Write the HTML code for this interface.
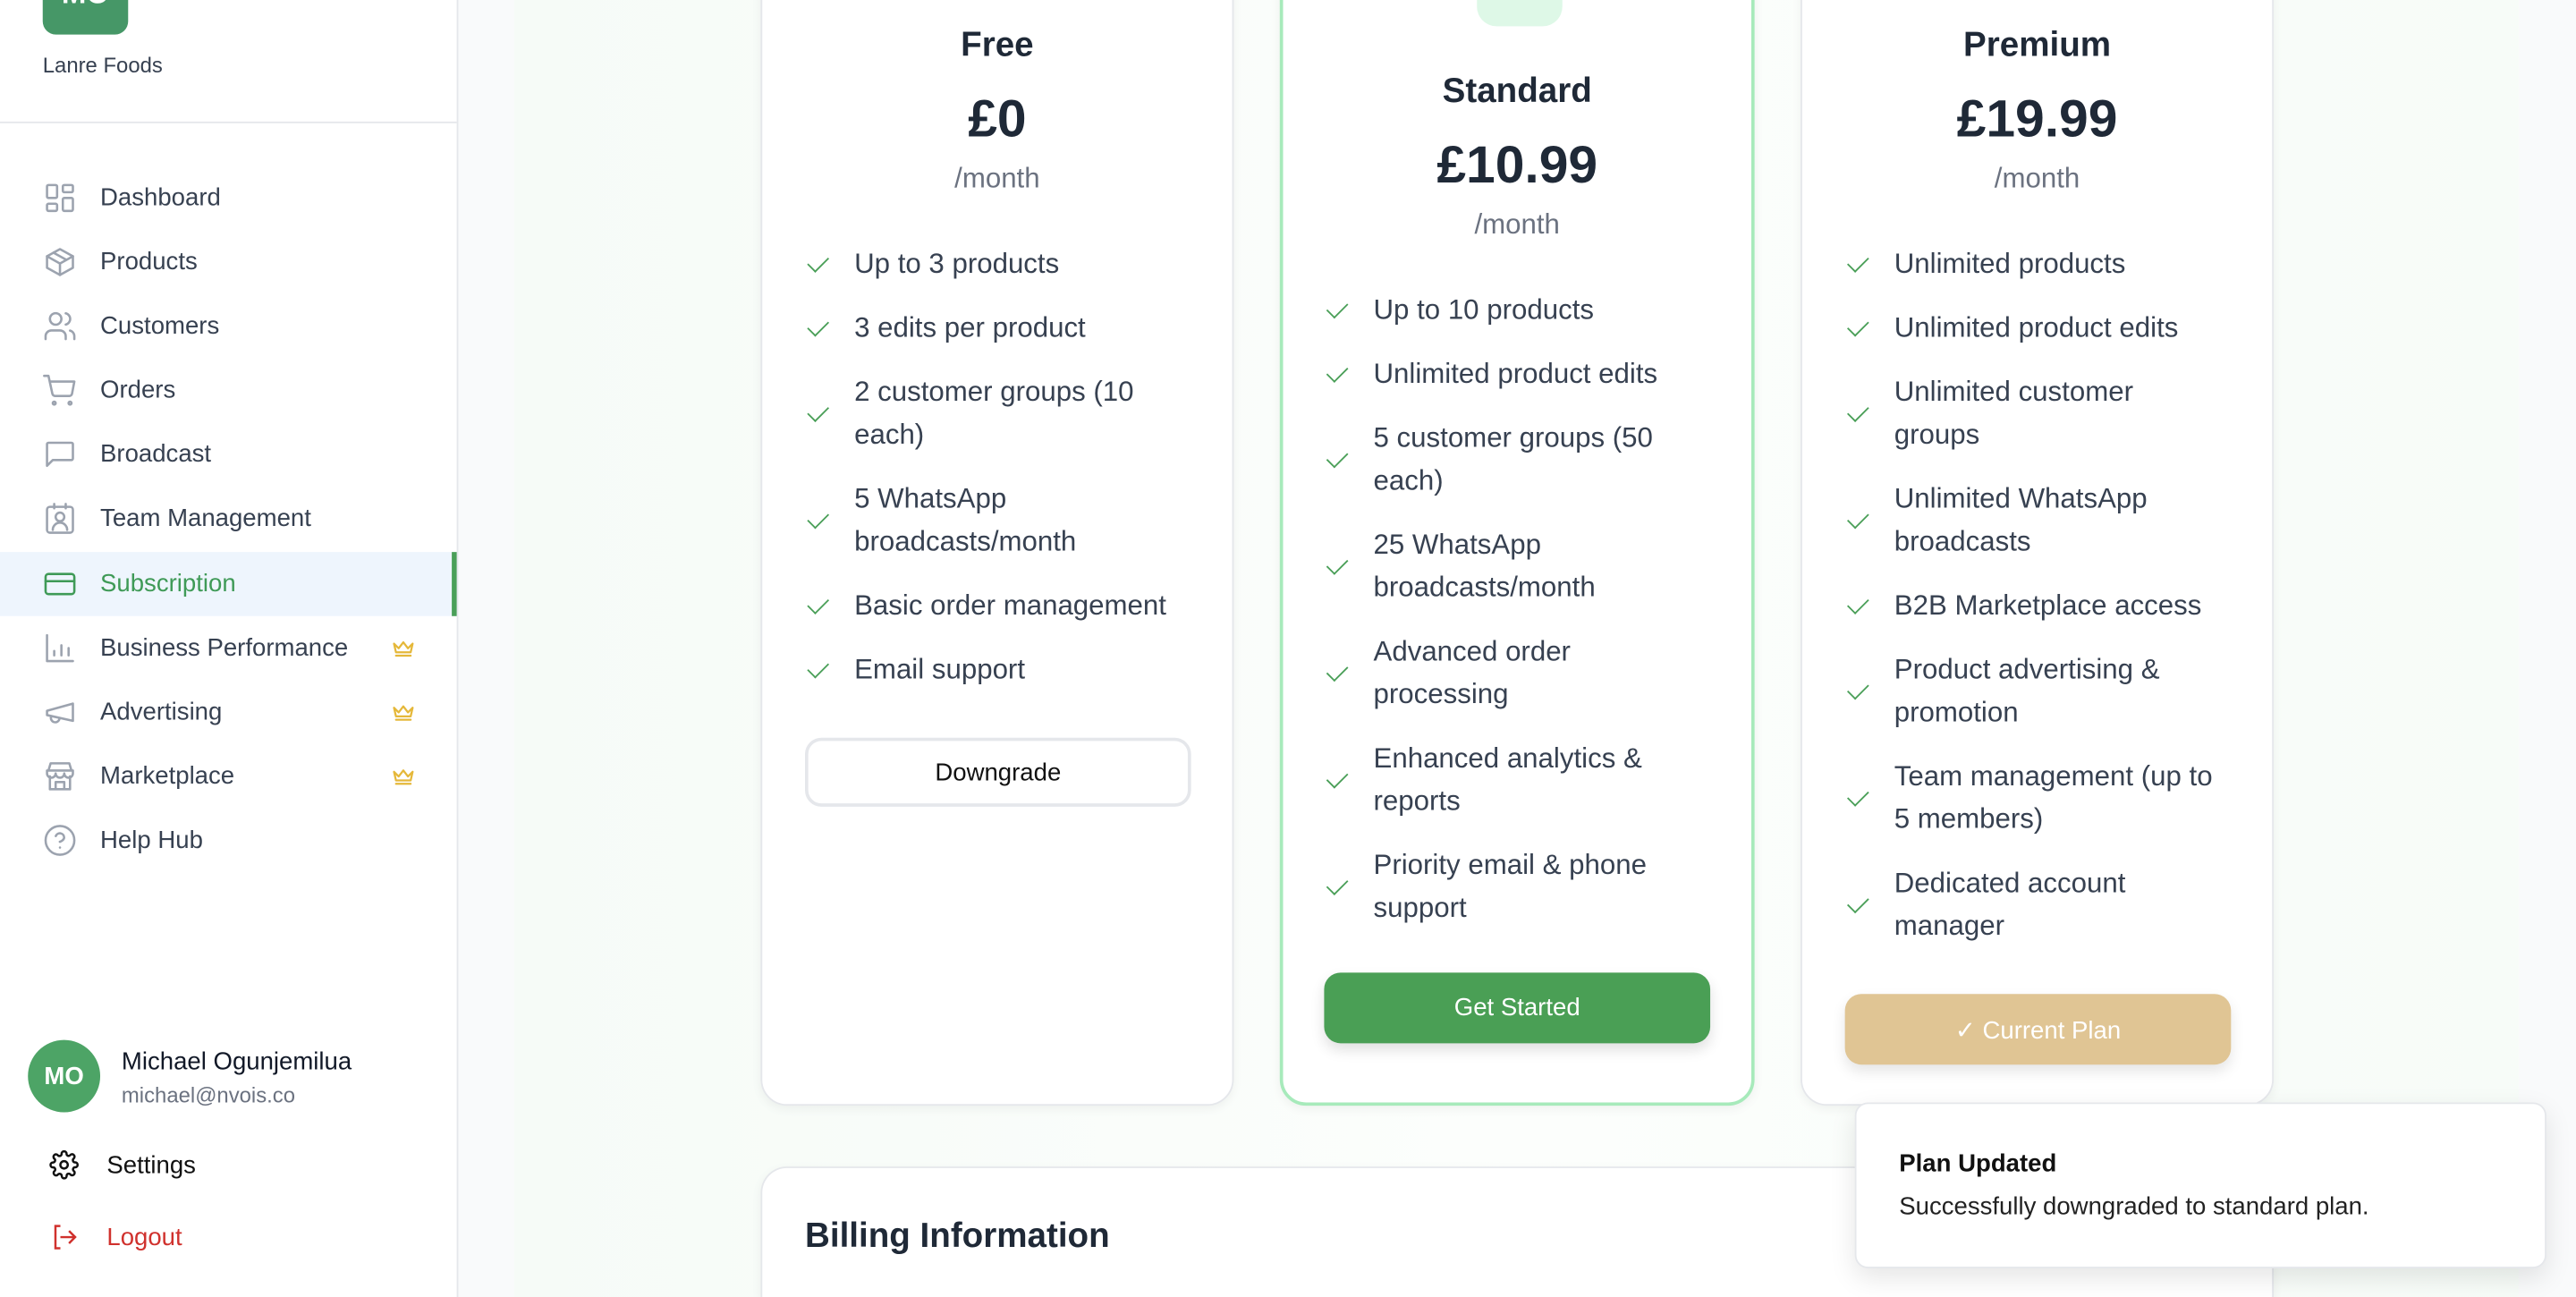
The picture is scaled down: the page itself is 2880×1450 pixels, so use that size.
<!DOCTYPE html>
<html><head><meta charset="utf-8"><style>
*{box-sizing:border-box;margin:0;padding:0}
html,body{width:2880px;height:1450px;overflow:hidden;background:#fff}
#s{position:absolute;left:0;top:0;width:1568px;height:789.5px;transform:scale(1.836735);transform-origin:0 0;font-family:"Liberation Sans",sans-serif;color:#1f2937;background:#f9fafb;overflow:hidden}
.abs{position:absolute}
#side{left:0;top:0;width:279px;height:790px;background:#fff;border-right:1px solid #e5e7eb;overflow:hidden}
.nav{position:absolute;left:0;width:279px;height:39px;display:flex;align-items:center;font-size:15px;color:#374151}
.nav svg{position:absolute;left:26px;width:21px;height:21px;fill:none;stroke:#9ca3af;stroke-width:1.6;stroke-linecap:round;stroke-linejoin:round}
.nav span{position:absolute;left:61px;top:11px}
.nav svg.crown{position:absolute;left:239px;top:15px;width:13px;height:10px;fill:none;stroke:#e5b83a;stroke-width:1.5}
.card{position:absolute;background:#fff;border:1px solid #e5e7eb;border-radius:16px;box-shadow:0 2px 6px rgba(0,0,0,.05)}
.t{position:absolute;width:100%;text-align:center}
.title{font-size:21px;font-weight:bold;color:#1f2937}
.price{font-size:32px;font-weight:bold;color:#1f2937}
.mo{font-size:17px;color:#6b7280}
ul{position:absolute;list-style:none}
li{position:relative;font-size:17px;line-height:26px;color:#374151;margin-bottom:13px;padding-left:30px}
li:before{content:"";position:absolute;left:2px;top:50%;width:11px;height:6px;border-left:1.6px solid #4a9f58;border-bottom:1.6px solid #4a9f58;transform:translateY(-75%) rotate(-45deg)}
.btn{position:absolute;border-radius:10px;display:flex;align-items:center;justify-content:center;font-size:15px}
</style></head><body><div id="s">
<div class="abs" style="left:313px;top:0;width:1220px;height:790px;background:linear-gradient(90deg,#f6fbf7,#fcfefc 50%,#f7fcf8)"></div>
<div id="side" class="abs">
 <div class="abs" style="left:26px;top:-12px;width:52px;height:33px;background:#469767;border-radius:8px;color:#fff;font-weight:bold;font-size:18px;text-align:center;line-height:16px;overflow:hidden">MO</div>
 <div class="abs" style="left:26px;top:32px;font-size:13px;color:#374151">Lanre Foods</div>
 <div class="abs" style="left:0;top:74px;width:279px;height:1px;background:#e5e7eb"></div>
 <div class="nav" style="top:101px"><svg viewBox="0 0 24 24"><rect x="3" y="3" width="7" height="9" rx="1"/><rect x="14" y="3" width="7" height="5" rx="1"/><rect x="14" y="12" width="7" height="9" rx="1"/><rect x="3" y="16" width="7" height="5" rx="1"/></svg><span>Dashboard</span></div>
 <div class="nav" style="top:140px"><svg viewBox="0 0 24 24"><path d="M21 8l-9-5-9 5v8l9 5 9-5z"/><path d="M3 8l9 5 9-5M12 13v8M7.5 5.5l9 5"/></svg><span>Products</span></div>
 <div class="nav" style="top:179px"><svg viewBox="0 0 24 24"><circle cx="9" cy="7" r="4"/><path d="M2 21v-2a4 4 0 014-4h6a4 4 0 014 4v2M16 3.1a4 4 0 010 7.8M22 21v-2a4 4 0 00-3-3.9"/></svg><span>Customers</span></div>
 <div class="nav" style="top:218px"><svg viewBox="0 0 24 24"><path d="M1 2h3l2.7 12.4a2 2 0 002 1.6h9.7a2 2 0 002-1.6L22 6H5.1"/><circle cx="8" cy="21" r="1"/><circle cx="19" cy="21" r="1"/></svg><span>Orders</span></div>
 <div class="nav" style="top:257px"><svg viewBox="0 0 24 24"><path d="M3 5a1 1 0 011-1h16a1 1 0 011 1v10a1 1 0 01-1 1H7l-4 4z"/></svg><span>Broadcast</span></div>
 <div class="nav" style="top:296px"><svg viewBox="0 0 24 24"><rect x="3" y="4" width="18" height="18" rx="2"/><path d="M8 2v3M16 2v3"/><circle cx="12" cy="11" r="3"/><path d="M7 20a5 5 0 0110 0"/></svg><span>Team Management</span></div>
 <div class="nav" style="top:336px;background:#eef5fd;color:#3f9a57"><svg viewBox="0 0 24 24" style="stroke:#3f9a57"><rect x="2" y="5" width="20" height="14" rx="2"/><path d="M2 10h20"/></svg><span>Subscription</span><div class="abs" style="right:0;top:0;width:4px;height:39px;background:#4a9f58"></div></div>
 <div class="nav" style="top:375px"><svg viewBox="0 0 24 24"><path d="M3 3v18h18M8 17v-3M13 17v-7M18 17v-5"/></svg><span>Business Performance</span><svg class="crown" viewBox="0 0 16 12"><path d="M1 2l3.5 3.5L8 1l3.5 4.5L15 2l-1.5 6.5h-11zM2.5 11h11"/></svg></div>
 <div class="nav" style="top:414px"><svg viewBox="0 0 24 24"><path d="M3 11l18-5v12L3 14z"/><path d="M11.6 16.8a3 3 0 11-5.8-1.6"/></svg><span>Advertising</span><svg class="crown" viewBox="0 0 16 12"><path d="M1 2l3.5 3.5L8 1l3.5 4.5L15 2l-1.5 6.5h-11zM2.5 11h11"/></svg></div>
 <div class="nav" style="top:453px"><svg viewBox="0 0 24 24"><path d="M4 8l1.5-5h13L20 8M3 8h18v2a3 3 0 01-6 0 3 3 0 01-6 0 3 3 0 01-6 0zM5 12v9h14v-9M9 21v-5h6v5"/></svg><span>Marketplace</span><svg class="crown" viewBox="0 0 16 12"><path d="M1 2l3.5 3.5L8 1l3.5 4.5L15 2l-1.5 6.5h-11zM2.5 11h11"/></svg></div>
 <div class="nav" style="top:492px"><svg viewBox="0 0 24 24"><circle cx="12" cy="12" r="10"/><path d="M9.1 9a3 3 0 015.8 1c0 2-3 3-3 3M12 17h.01"/></svg><span>Help Hub</span></div>
 <div class="abs" style="left:17px;top:633px;width:44px;height:44px;border-radius:50%;background:#4da466;color:#fff;font-weight:bold;font-size:15px;display:flex;align-items:center;justify-content:center">MO</div>
 <div class="abs" style="left:74px;top:638px;font-size:15px;color:#111827">Michael Ogunjemilua</div>
 <div class="abs" style="left:74px;top:659px;font-size:13px;color:#6b7280">michael@nvois.co</div>
 <svg class="abs" style="left:30px;top:700px;width:18px;height:18px;fill:none;stroke:#111;stroke-width:1.8" viewBox="0 0 24 24"><circle cx="12" cy="12" r="3"/><path d="M19.4 15a1.7 1.7 0 00.3 1.8l.1.1a2 2 0 11-2.8 2.8l-.1-.1a1.7 1.7 0 00-1.8-.3 1.7 1.7 0 00-1 1.5V21a2 2 0 11-4 0v-.1a1.7 1.7 0 00-1.1-1.5 1.7 1.7 0 00-1.8.3l-.1.1a2 2 0 11-2.8-2.8l.1-.1a1.7 1.7 0 00.3-1.8 1.7 1.7 0 00-1.5-1H3a2 2 0 110-4h.1a1.7 1.7 0 001.5-1.1 1.7 1.7 0 00-.3-1.8l-.1-.1a2 2 0 112.8-2.8l.1.1a1.7 1.7 0 001.8.3H9a1.7 1.7 0 001-1.5V3a2 2 0 114 0v.1a1.7 1.7 0 001 1.5 1.7 1.7 0 001.8-.3l.1-.1a2 2 0 112.8 2.8l-.1.1a1.7 1.7 0 00-.3 1.8V9a1.7 1.7 0 001.5 1H21a2 2 0 110 4h-.1a1.7 1.7 0 00-1.5 1z"/></svg>
 <div class="abs" style="left:65px;top:701px;font-size:15px;color:#111">Settings</div>
 <svg class="abs" style="left:30px;top:744px;width:18px;height:18px;fill:none;stroke:#d0312d;stroke-width:1.8" viewBox="0 0 24 24"><path d="M9 21H5V3h4M16 17l5-5-5-5M21 12H9"/></svg>
 <div class="abs" style="left:65px;top:745px;font-size:15px;color:#d0312d">Logout</div>
</div>

<div class="card" style="left:463px;top:-20px;width:288px;height:693px">
 <div class="t title" style="top:35px">Free</div>
 <div class="t price" style="top:73px">£0</div>
 <div class="t mo" style="top:118px">/month</div>
 <ul style="left:26px;top:167px;width:250px">
  <li>Up to 3 products</li><li>3 edits per product</li><li>2 customer groups (10<br>each)</li><li>5 WhatsApp<br>broadcasts/month</li><li>Basic order management</li><li>Email support</li></ul>
 <div class="btn" style="left:26px;top:468px;width:235px;height:42px;border:2px solid #e5e7eb;color:#111">Downgrade</div>
</div>
<div class="card" style="left:779px;top:-20px;width:289px;height:693px;border:2px solid #a7eabb">
 <div class="abs" style="left:118px;top:0;width:52px;height:34px;background:#def8e7;border-radius:0 0 12px 12px"></div>
 <div class="t title" style="top:62px">Standard</div>
 <div class="t price" style="top:100px">£10.99</div>
 <div class="t mo" style="top:145px">/month</div>
 <ul style="left:25px;top:194px;width:250px">
  <li>Up to 10 products</li><li>Unlimited product edits</li><li>5 customer groups (50<br>each)</li><li>25 WhatsApp<br>broadcasts/month</li><li>Advanced order<br>processing</li><li>Enhanced analytics &amp;<br>reports</li><li>Priority email &amp; phone<br>support</li></ul>
 <div class="btn" style="left:25px;top:610px;width:235px;height:43px;background:#4a9f55;color:#fff;box-shadow:0 4px 8px rgba(0,0,0,.12)">Get Started</div>
</div>
<div class="card" style="left:1096px;top:-20px;width:288px;height:693px">
 <div class="t title" style="top:35px">Premium</div>
 <div class="t price" style="top:73px">£19.99</div>
 <div class="t mo" style="top:118px">/month</div>
 <ul style="left:26px;top:167px;width:250px">
  <li>Unlimited products</li><li>Unlimited product edits</li><li>Unlimited customer<br>groups</li><li>Unlimited WhatsApp<br>broadcasts</li><li>B2B Marketplace access</li><li>Product advertising &amp;<br>promotion</li><li>Team management (up to<br>5 members)</li><li>Dedicated account<br>manager</li></ul>
 <div class="btn" style="left:26px;top:624px;width:235px;height:43px;background:#e0c594;color:#fff;box-shadow:0 4px 8px rgba(0,0,0,.1)">✓ Current Plan</div>
</div>
<div class="card" style="left:463px;top:710px;width:921px;height:79.5px;border-bottom:none;border-radius:16px 16px 0 0">
 <div class="abs" style="left:26px;top:30px;font-size:21px;font-weight:bold">Billing Information</div>
</div>
<div class="abs" style="left:1129px;top:671px;width:421px;height:101px;background:#fff;border:1px solid #e5e7eb;border-radius:8px;box-shadow:0 6px 16px rgba(0,0,0,.1)">
 <div class="abs" style="left:26px;top:28px;font-size:15px;font-weight:bold;color:#111">Plan Updated</div>
 <div class="abs" style="left:26px;top:54px;font-size:15px;color:#222">Successfully downgraded to standard plan.</div>
</div>
</div></body></html>
